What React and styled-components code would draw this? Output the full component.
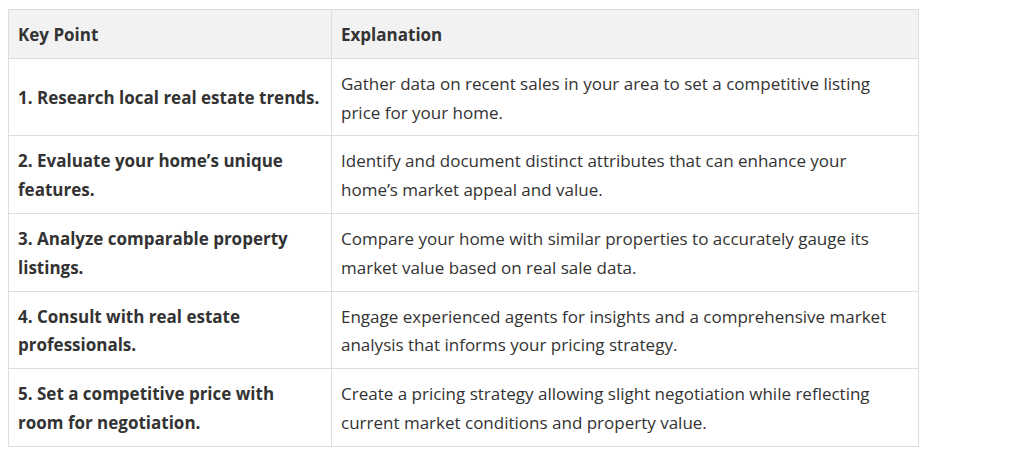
import React from 'react'
import styled, { createGlobalStyle } from 'styled-components'

const GlobalStyle = createGlobalStyle`
    body {
        margin: 8px;
        background: #fff;
        font-family: "Open Sans", "Noto Sans", sans-serif;
        color: #333;
    }
`

const Table = styled.table`
    width: 911px;
    border-collapse: collapse;
    table-layout: fixed;
    margin-top: 1px;
    font-size: 17px;
    line-height: 28.8px;
`

const HeadCell = styled.th`
    box-sizing: border-box;
    background: #f2f2f2;
    border: 1px solid #dddddd;
    padding: 11px ${props => props.$key ? '8px' : '12px'} 8px 9px;
    text-align: left;
    font-weight: 700;
    width: ${props => props.$key ? '323px' : 'auto'};
`

const Cell = styled.td`
    border: 1px solid #dddddd;
    padding: 11px ${props => props.$key ? '8px' : '12px'} 8px 9px;
    vertical-align: middle;
    font-weight: ${props => props.$key ? 700 : 400};
`

const rows = [
    ["1. Research local real estate trends.", "Gather data on recent sales in your area to set a competitive listing price for your home."],
    ["2. Evaluate your home\u2019s unique features.", "Identify and document distinct attributes that can enhance your home\u2019s market appeal and value."],
    ["3. Analyze comparable property listings.", "Compare your home with similar properties to accurately gauge its market value based on real sale data."],
    ["4. Consult with real estate professionals.", "Engage experienced agents for insights and a comprehensive market analysis that informs your pricing strategy."],
    ["5. Set a competitive price with room for negotiation.", "Create a pricing strategy allowing slight negotiation while reflecting current market conditions and property value."],
]

export default function App() {
    return (
        <>
            <GlobalStyle />
            <Table>
                <thead>
                    <tr>
                        <HeadCell $key>Key Point</HeadCell>
                        <HeadCell>Explanation</HeadCell>
                    </tr>
                </thead>
                <tbody>
                    {rows.map((row, index) => (
                        <tr key={index}>
                            <Cell $key>{row[0]}</Cell>
                            <Cell>{row[1]}</Cell>
                        </tr>
                    ))}
                </tbody>
            </Table>
        </>
    )
}
